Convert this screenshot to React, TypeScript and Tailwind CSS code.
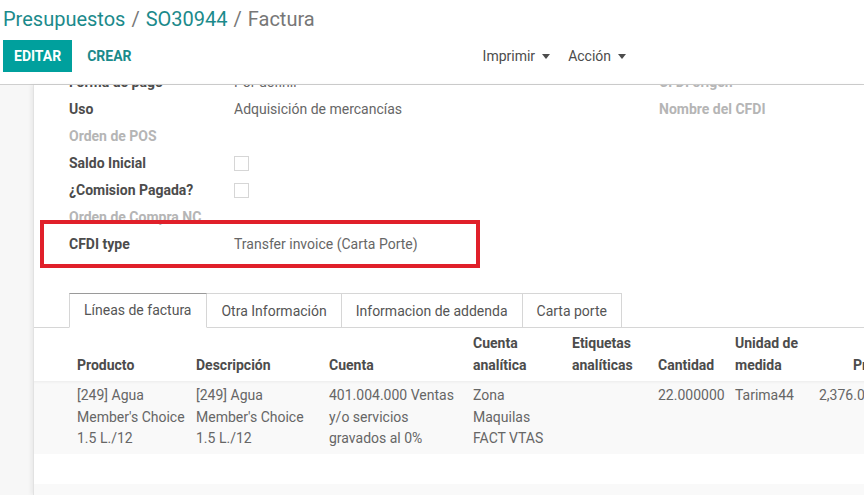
interface FormRow {
  label: string;
  value?: string;
  muted?: boolean;
  checkbox?: boolean;
}

const leftRows: FormRow[] = [
  { label: 'Forma de pago', value: 'Por definir' },
  { label: 'Uso', value: 'Adquisición de mercancías' },
  { label: 'Orden de POS', muted: true },
  { label: 'Saldo Inicial', checkbox: true },
  { label: '¿Comision Pagada?', checkbox: true },
  { label: 'Orden de Compra NC', muted: true },
  { label: 'CFDI type', value: 'Transfer invoice (Carta Porte)' },
];

const rightRows: FormRow[] = [
  { label: 'CFDI origen', muted: true },
  { label: 'Nombre del CFDI', muted: true },
];

const tabs = ['Líneas de factura', 'Otra Información', 'Informacion de addenda', 'Carta porte'];

function Caret() {
  return (
    <svg width="8" height="5" viewBox="0 0 8 5" className="ml-[7px] mt-[1px]">
      <path d="M0 0h8L4 5z" fill="#4c4c4c" />
    </svg>
  );
}

function FieldRow({ row }: { row: FormRow }) {
  return (
    <div className="flex h-[27px] items-center">
      <div className={`w-[165px] shrink-0 font-bold ${row.muted ? 'text-[#b5b5b5]' : 'text-[#4c4c4c]'}`}>
        {row.label}
      </div>
      {row.checkbox ? (
        <div className="w-[15px] h-[15px] border border-[#d6d6d6] bg-white" />
      ) : (
        <div className="text-[#666]">{row.value}</div>
      )}
    </div>
  );
}

export default function App() {
  return (
    <div
      className="relative h-[495px] w-[864px] overflow-hidden bg-white text-[14px]"
      style={{ fontFamily: 'Roboto, "Noto Sans", sans-serif' }}
    >
      {/* Control panel */}
      <div className="h-[85px] border-b border-[#cfcfcf] bg-white">
        <div className="pl-[3px] pt-[5px] text-[20px] leading-[28px]">
          <span className="text-[#1b8a8b]">Presupuestos</span>
          <span className="text-[#777] px-[6px]">/</span>
          <span className="text-[#1b8a8b]">SO30944</span>
          <span className="text-[#777] px-[6px]">/</span>
          <span className="text-[#777]">Factura</span>
        </div>
        <div className="flex items-center mt-[7px] pl-[3px]">
          <button className="h-[32px] px-[11px] bg-[#00a09d] text-white font-bold uppercase">Editar</button>
          <button className="h-[32px] ml-[5px] px-[10px] text-[#1b8a8b] font-bold uppercase">Crear</button>
          <div className="flex items-center ml-[341px] text-[#4c4c4c]">
            <span>Imprimir</span>
            <Caret />
          </div>
          <div className="flex items-center ml-[18px] text-[#4c4c4c]">
            <span>Acción</span>
            <Caret />
          </div>
        </div>
      </div>

      {/* Content area */}
      <div className="flex h-[410px] bg-[#f7f7f7]">
        <div className="w-[33px] shrink-0" />
        <div className="flex-1 bg-white border-l border-[#e2e2e2] shadow-[-2px_0_4px_rgba(0,0,0,0.06)] overflow-hidden">
          <div className="-mt-[16px]">
            {/* Form groups */}
            <div className="flex pl-[35px]">
              <div className="w-[590px]">
                {leftRows.map((row) => (
                  <FieldRow key={row.label} row={row} />
                ))}
              </div>
              <div>
                {rightRows.map((row) => (
                  <FieldRow key={row.label} row={row} />
                ))}
              </div>
            </div>

            {/* Tabs */}
            <div className="mt-[35px] flex border-b border-[#d6d6d6] pl-[35px]">
              {tabs.map((tab, i) => (
                <div
                  key={tab}
                  className={`-mb-px h-[35px] px-[14px] flex items-center border-t border-r border-[#d6d6d6] ${
                    i === 0 ? 'border-l border-t-[#9a9a9a] border-b border-b-white bg-white pr-[15px]' : ''
                  } text-[#555]`}
                >
                  {tab}
                </div>
              ))}
            </div>

            {/* Invoice lines */}
            <table className="table-fixed border-collapse w-[920px] whitespace-nowrap">
              <colgroup>
                <col className="w-[154px]" />
                <col className="w-[133px]" />
                <col className="w-[144px]" />
                <col className="w-[99px]" />
                <col className="w-[86px]" />
                <col className="w-[77px]" />
                <col className="w-[84px]" />
                <col />
              </colgroup>
              <thead>
                <tr className="text-[#4c4c4c] font-bold leading-[22px] align-bottom">
                  <th className="text-left pl-[43px] pr-2 pt-[4px] pb-[5px]">Producto</th>
                  <th className="text-left px-2 pt-[4px] pb-[5px]">Descripción</th>
                  <th className="text-left px-2 pt-[4px] pb-[5px]">Cuenta</th>
                  <th className="text-left px-2 pt-[4px] pb-[5px]">Cuenta<br />analítica</th>
                  <th className="text-left px-2 pt-[4px] pb-[5px]">Etiquetas<br />analíticas</th>
                  <th className="text-left px-2 pt-[4px] pb-[5px]">Cantidad</th>
                  <th className="text-left px-2 pt-[4px] pb-[5px]">Unidad de<br />medida</th>
                  <th className="text-left pl-[42px] pr-2 pt-[4px] pb-[5px]">Precio</th>
                </tr>
              </thead>
              <tbody className="text-[#666] leading-[21.5px] align-top">
                <tr className="bg-[#f9f9f9] shadow-[inset_0_3px_3px_-2px_rgba(0,0,0,0.06)]">
                  <td className="pl-[43px] pr-2 py-1">[249] Agua<br />Member's Choice<br />1.5 L./12</td>
                  <td className="px-2 py-1">[249] Agua<br />Member's Choice<br />1.5 L./12</td>
                  <td className="px-2 py-1">401.004.000 Ventas<br />y/o servicios<br />gravados al 0%</td>
                  <td className="px-2 py-1">Zona<br />Maquilas<br />FACT VTAS</td>
                  <td className="px-2 py-1" />
                  <td className="px-2 py-1">22.000000</td>
                  <td className="px-2 py-1">Tarima44</td>
                  <td className="px-2 py-1">2,376.000000</td>
                </tr>
                <tr className="h-[30px]">
                  <td colSpan={8} />
                </tr>
                <tr className="h-[30px] bg-[#f9f9f9]">
                  <td colSpan={8} />
                </tr>
              </tbody>
            </table>
          </div>
        </div>
      </div>

      {/* Highlight annotation */}
      <div className="absolute left-[40px] top-[220px] w-[440px] h-[48px] border-[4px] border-[#e0202a] pointer-events-none" />
    </div>
  );
}
